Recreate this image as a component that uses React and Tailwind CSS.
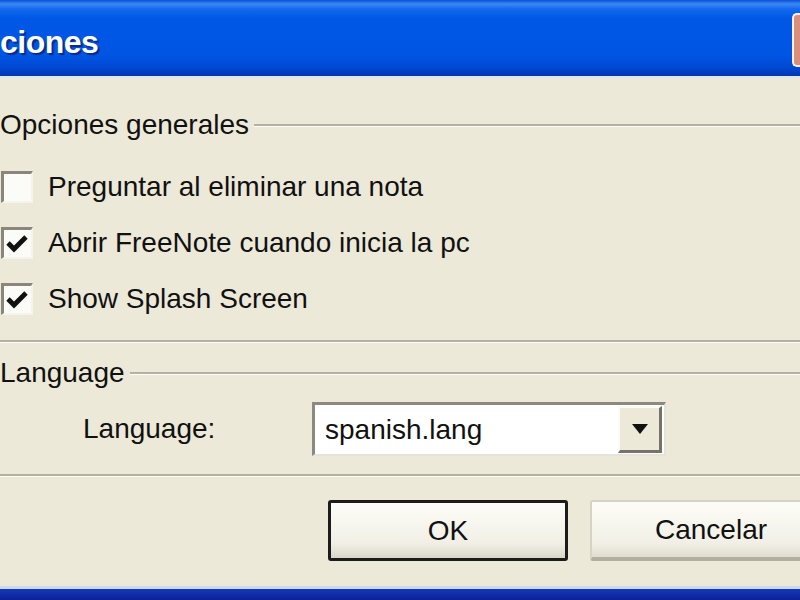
import React from "react";

const font = { fontFamily: '"Liberation Sans", Arial, sans-serif' };

const Check = ({ checked }) => (
  <div className="w-[32px] h-[32px] shrink-0 bg-[#fbfbf7] border-t-[3px] border-l-[3px] border-t-[#8a877a] border-l-[#8a877a] border-r-2 border-b-2 border-r-[#f4f3ec] border-b-[#f4f3ec] flex items-center justify-center">
    {checked && (
      <svg width="22" height="20" viewBox="0 0 22 20" className="-ml-[1px]">
        <path d="M2 9 L8 15 L20 3" fill="none" stroke="#111" strokeWidth="4.8" strokeLinejoin="miter" />
      </svg>
    )}
  </div>
);

const GroupHeader = ({ label }) => (
  <div className="h-[28px] flex items-center">
    <span className="text-[28px] leading-none text-[#111] pr-[5px]">{label}</span>
    <div className="flex-1 border-t-2 border-t-[#b4b1a3] border-b border-b-[#fffef8]" />
  </div>
);

const Divider = () => <div className="h-[3px] border-t-2 border-t-[#b4b1a3] border-b border-b-[#fffef8]" />;

const Option = ({ checked, label }) => (
  <div className="h-[56px] flex items-center gap-[15px] pl-[1px]">
    <Check checked={checked} />
    <span className="text-[28px] leading-none text-[#111]">{label}</span>
  </div>
);

export default function App() {
  return (
    <div className="w-[800px] h-[600px] overflow-hidden flex flex-col bg-[#ece9d8]" style={font}>
      <div className="h-[76px] flex items-center bg-[linear-gradient(180deg,#0a4fd8_0px,#3d88f2_4px,#1368ee_9px,#0058e6_18px,#0055e3_55px,#0048d2_68px,#0036b0_76px)]">
        <span className="text-[32px] font-bold text-white leading-none mt-[8px] tracking-[-0.5px] [text-shadow:2px_2px_1px_#0a2a8a]">ciones</span>
        <div className="ml-auto w-[8px] h-[54px] mt-[4px] rounded-l-[5px] border-2 border-r-0 border-[#f4f2ee] bg-[#d98f7c]" />
      </div>
      <div className="h-[2px] bg-[#dbe6f8]" />

      <div className="mt-[33px]">
        <GroupHeader label="Opciones generales" />
      </div>
      <div className="mt-[20px]">
        <Option checked={false} label="Preguntar al eliminar una nota" />
        <Option checked label="Abrir FreeNote cuando inicia la pc" />
        <Option checked label="Show Splash Screen" />
      </div>
      <div className="mt-[13px]">
        <Divider />
      </div>

      <div className="mt-[16px]">
        <GroupHeader label="Language" />
      </div>
      <div className="mt-[15px] h-[54px] flex items-center">
        <span className="w-[312px] pl-[83px] text-[28px] leading-none text-[#111]">Language:</span>
        <div className="w-[354px] h-[54px] bg-white border-t-[3px] border-l-[3px] border-t-[#8c8a80] border-l-[#8c8a80] border-r-2 border-b-2 border-r-[#e6e4da] border-b-[#e6e4da] flex items-center">
          <span className="flex-1 pl-[10px] text-[28px] leading-none text-[#111]">spanish.lang</span>
          <div className="w-[44px] h-[47px] mr-[2px] bg-[#ece9d8] border-t-2 border-l-2 border-t-[#fbfaf4] border-l-[#fbfaf4] border-r-[3px] border-b-[3px] border-r-[#76746a] border-b-[#76746a] flex items-center justify-center">
            <svg width="18" height="12" viewBox="0 0 18 12">
              <path d="M1 1 H17 L9 11 Z" fill="#111" />
            </svg>
          </div>
        </div>
      </div>
      <div className="mt-[18px]">
        <Divider />
      </div>

      <div className="mt-[23px] flex gap-[22px] pl-[328px]">
        <button className="w-[240px] h-[61px] shrink-0 rounded-[3px] border-[3px] border-[#1c1c1a] bg-[linear-gradient(180deg,#fdfdf8,#f1efe5_75%,#d9d6c8)] text-[28px] leading-none text-[#111]" style={font}>
          OK
        </button>
        <button className="w-[242px] h-[61px] shrink-0 rounded-[3px] border-2 border-[#d6d3c6] border-b-[4px] border-b-[#b2afa1] bg-[linear-gradient(180deg,#fdfdf8,#f1efe5_75%,#e0ddd0)] text-[28px] leading-none text-[#111]" style={font}>
          Cancelar
        </button>
      </div>

      <div className="flex-1" />
      <div className="h-[3px] bg-[#c9d9f6]" />
      <div className="h-[11px] bg-[linear-gradient(180deg,#1638b8,#0b2196)]" />
    </div>
  );
}
